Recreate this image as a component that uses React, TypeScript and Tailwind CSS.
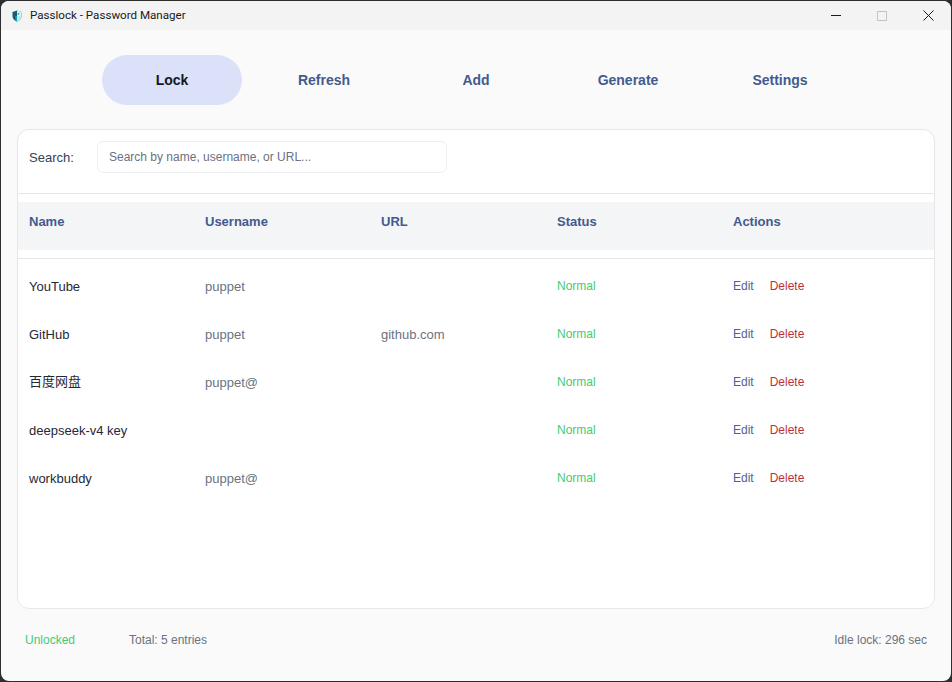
import React from "react";

const rows = [
  { name: "YouTube", user: "puppet", url: "" },
  { name: "GitHub", user: "puppet", url: "github.com" },
  { name: "百度网盘", user: "puppet@", url: "" },
  { name: "deepseek-v4 key", user: "", url: "" },
  { name: "workbuddy", user: "puppet@", url: "" },
];

const nav = ["Lock", "Refresh", "Add", "Generate", "Settings"];

function ShieldIcon() {
  return (
    <svg width="10" height="12" viewBox="0 0 10 12">
      <path d="M5 0.5 L9.5 2 V6 C9.5 8.8 7.5 10.6 5 11.5 C2.5 10.6 0.5 8.8 0.5 6 V2 Z" fill="#14606e" />
      <path d="M5 0.5 L9.5 2 V6 L5 6 Z" fill="#dff3f5" />
      <path d="M5 6 H9.5 C9.5 8.8 7.5 10.6 5 11.5 Z" fill="#bfeaf0" />
      <path d="M3.4 6 H5 V11.5 C4.4 11.3 3.9 11 3.4 10.7 Z" fill="#12a5b8" />
      <rect x="5.6" y="3" width="1.6" height="1.6" fill="#12a5b8" />
    </svg>
  );
}

export default function App() {
  return (
    <div className="h-[682px] w-[952px] overflow-hidden bg-[#2e2e2e] p-px font-['Liberation_Sans',Arial,'Noto_Sans_CJK_SC',sans-serif]">
      <div className="flex h-[680px] flex-col overflow-hidden rounded-lg bg-[#fafafa]">
        {/* title bar */}
        <div className="flex h-[29px] shrink-0 items-center bg-[#f3f3f3] pl-[11px]">
          <ShieldIcon />
          <span className="ml-[8px] font-['Roboto',sans-serif] text-[11.6px] text-[#1a1a1a]">Passlock - Password Manager</span>
          <div className="ml-auto flex items-center">
            <div className="flex w-[46px] justify-center">
              <div className="h-px w-[10px] bg-[#1a1a1a]" />
            </div>
            <div className="flex w-[46px] justify-center">
              <div className="h-[10px] w-[10px] border border-[#c4c4c4]" />
            </div>
            <div className="flex w-[46px] justify-center">
              <svg width="11" height="11" viewBox="0 0 11 11" stroke="#1a1a1a" strokeWidth="1">
                <path d="M0.5 0.5 L10.5 10.5 M10.5 0.5 L0.5 10.5" />
              </svg>
            </div>
          </div>
        </div>

        <div className="flex min-h-0 flex-1 flex-col px-4">
          {/* nav */}
          <div className="mt-[25px] flex h-[50px] shrink-0 gap-3 pl-[85px]">
            {nav.map((item, i) => (
              <div
                key={item}
                className={
                  i === 0
                    ? "flex w-[140px] items-center justify-center rounded-[25px] bg-[#dbe1f8] text-sm font-bold text-[#111827]"
                    : "flex w-[140px] items-center justify-center text-sm font-bold text-[#435a8f]"
                }
              >
                {item}
              </div>
            ))}
          </div>

          {/* card */}
          <div className="mt-6 h-[480px] shrink-0 rounded-xl border border-[#e5e7eb] bg-white">
            <div className="flex h-[64px] items-start border-b border-[#e5e7eb] pl-[11px] pt-[11px]">
              <span className="flex h-8 w-[68px] shrink-0 items-center pt-px text-[13px] text-[#374151]">Search:</span>
              <div className="flex h-8 w-[350px] items-center rounded-md border border-[#eceef1] px-[11px] text-xs text-[#6b7280]">
                Search by name, username, or URL...
              </div>
            </div>
            <div className="mt-2 grid h-12 grid-cols-[176px_176px_176px_176px_176px] items-center bg-[#f3f5f7] pl-[11px] text-[13px] font-bold text-[#435a8f]">
              <span className="-mt-[8px]">Name</span>
              <span className="-mt-[8px]">Username</span>
              <span className="-mt-[8px]">URL</span>
              <span className="-mt-[8px]">Status</span>
              <span className="-mt-[8px]">Actions</span>
            </div>
            <div className="mt-2 border-t border-[#e5e7eb] pt-[3px]">
              {rows.map((r) => (
                <div key={r.name} className="grid h-12 grid-cols-[176px_176px_176px_176px_176px] items-center pl-[11px]">
                  <span className={r.name === "百度网盘" ? "text-[13px] text-[#1f2937]" : "pt-px text-[13px] text-[#1f2937]"}>{r.name}</span>
                  <span className="pt-px text-[13px] text-[#6b7280]">{r.user}</span>
                  <span className="pt-px text-[13px] text-[#6b7280]">{r.url}</span>
                  <span className="text-xs text-[#3fcb78]">Normal</span>
                  <span className="flex gap-4 text-xs">
                    <span className="text-[#525f96]">Edit</span>
                    <span className="text-[#c0303a]">Delete</span>
                  </span>
                </div>
              ))}
            </div>
          </div>

          {/* status bar */}
          <div className="flex flex-1 items-center pb-[11px] pl-2 pr-2 text-xs text-[#6b7280]">
            <span className="w-[104px] text-[#3fcb78]">Unlocked</span>
            <span>Total: 5 entries</span>
            <span className="ml-auto">Idle lock: 296 sec</span>
          </div>
        </div>
      </div>
    </div>
  );
}
